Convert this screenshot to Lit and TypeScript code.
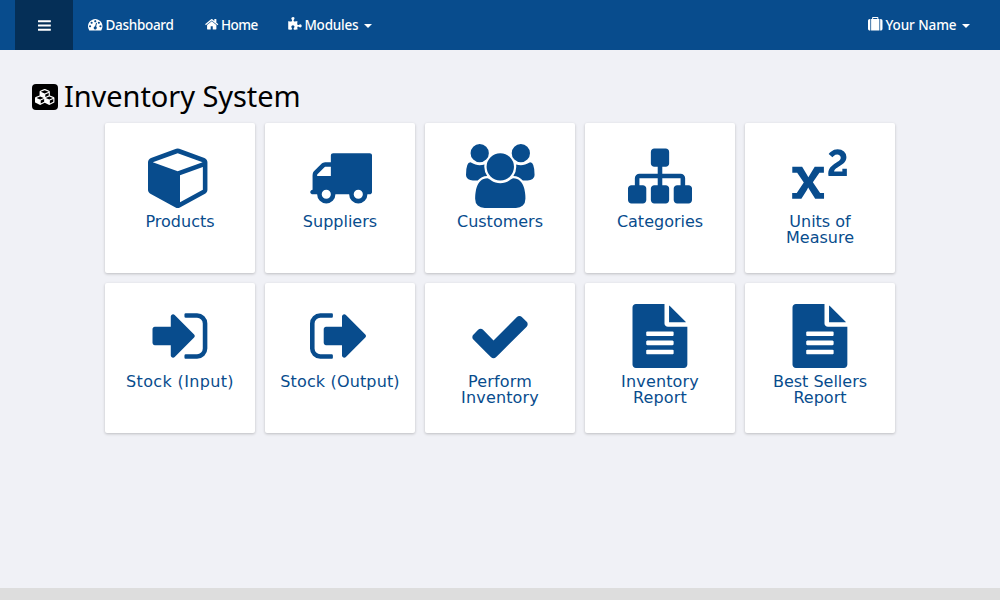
import { LitElement, html, css, svg } from "lit";
import { customElement, property } from "lit/decorators.js";

interface Glyph {
  box: string;
  w: number;
  d: string;
}

// Icon outlines on a 1792-unit em; w is the advance width.
const GLYPHS: Record<string, Glyph> = {
  cube: {
    box: "0 0 1792 1792", w: 1792,
    d: "M896 1629l640-349v-636l-640 233v752zm-64-865l698-254-698-254-698 254zm832-252v768q0 35-18 65t-49 47l-704 384q-28 16-61 16t-61-16l-704-384q-31-17-49-47t-18-65v-768q0-40 23-73t61-47l704-256q22-8 44-8t44 8l704 256q38 14 61 47t23 73z",
  },
  truck: {
    box: "0 0 1792 1792", w: 1792,
    d: "M640 1408q0-52-38-90t-90-38-90 38-38 90 38 90 90 38 90-38 38-90zm-384-512h384v-256h-158q-13 0-22 9l-195 195q-9 9-9 22v30zm1280 512q0-52-38-90t-90-38-90 38-38 90 38 90 90 38 90-38 38-90zm256-1088v1024q0 15-4 26.500t-13.500 18.500-16.500 11.500-23.500 6-22.500 2-25.500 0-22.500-.5q0 106-75 181t-181 75-181-75-75-181h-384q0 106-75 181t-181 75-181-75-75-181h-64q-3 0-22.500.5t-25.500 0-22.500-2-23.500-6-16.500-11.500-13.500-18.500-4-26.500q0-26 19-45t45-19v-320q0-8-.5-35t0-38 2.500-34.500 6.500-37 14-30.500 22.500-30l198-198q19-19 50.500-32t58.500-13h160v-192q0-26 19-45t45-19h1024q26 0 45 19t19 45z",
  },
  users: {
    box: "0 0 1920 1792", w: 1920,
    d: "M593 896q-162 5-265 128h-134q-82 0-138-40.500t-56-118.500q0-353 124-353 6 0 43.500 21t97.500 42.500 119 21.500q67 0 133-23-5 37-5 66 0 139 81 256zm1071 637q0 120-73 189.500t-194 69.500h-874q-121 0-194-69.500t-73-189.500q0-53 3.500-103.500t14-109 26.500-108.500 43-97.500 62-81 85.500-53.500 111.500-20q10 0 43 21.500t73 48 107 48 135 21.500 135-21.500 107-48 73-48 43-21.500q61 0 111.500 20t85.500 53.500 62 81 43 97.500 26.500 108.500 14 109 3.500 103.500zm-1024-1277q0 106-75 181t-181 75-181-75-75-181 75-181 181-75 181 75 75 181zm704 384q0 159-112.500 271.500t-271.500 112.500-271.500-112.500-112.500-271.500 112.500-271.500 271.500-112.500 271.500 112.500 112.500 271.500zm576 225q0 78-56 118.500t-138 40.500h-134q-103-123-265-128 81-117 81-256 0-29-5-66 66 23 133 23 59 0 119-21.500t97.500-42.500 43.500-21q124 0 124 353zm-128-609q0 106-75 181t-181 75-181-75-75-181 75-181 181-75 181 75 75 181z",
  },
  sitemap: {
    box: "0 0 1792 1792", w: 1792,
    d: "M1792 1248v320q0 40-28 68t-68 28h-320q-40 0-68-28t-28-68v-320q0-40 28-68t68-28h96v-192h-512v192h96q40 0 68 28t28 68v320q0 40-28 68t-68 28h-320q-40 0-68-28t-28-68v-320q0-40 28-68t68-28h96v-192h-512v192h96q40 0 68 28t28 68v320q0 40-28 68t-68 28h-320q-40 0-68-28t-28-68v-320q0-40 28-68t68-28h96v-192q0-52 38-90t90-38h512v-192h-96q-40 0-68-28t-28-68v-320q0-40 28-68t68-28h320q40 0 68 28t28 68v320q0 40-28 68t-68 28h-96v192h512q52 0 90 38t38 90v192h96q40 0 68 28t28 68z",
  },
  power: {
    box: "16 0 1792 1792", w: 1792,
    d: "M1025 1369v167h-248l-159-252-24-42q-8-9-11-21h-3l-9 21q-10 20-25 44l-155 250h-258v-167h128l197-291-185-272h-137v-168h276l139 228q2 4 23 42 8 9 11 21h3q3-9 11-21l25-42 140-228h257v168h-125l-184 267 204 296h109zm639-679v206h-514l-3-27q-4-28-4-46 0-64 26-117t65-86.500 84-65 84-54.500 65-54 26-64q0-38-29.500-62.500t-70.500-24.500q-51 0-97 39-14 11-36 38l-105-92q26-37 63-66 83-65 188-65 110 0 178 59.500t68 158.500q0 56-24.500 103t-62 76.500-81.500 58.500-82 50.500-65.500 51.500-30.500 63h232v-80h126z",
  },
  signIn: {
    box: "14 0 1536 1792", w: 1536,
    d: "M1184 896q0 26-19 45l-544 544q-19 19-45 19t-45-19-19-45v-288h-448q-26 0-45-19t-19-45v-384q0-26 19-45t45-19h448v-288q0-26 19-45t45-19 45 19l544 544q19 19 19 45zm352-352v704q0 119-84.500 203.500t-203.500 84.500h-320q-13 0-22.500-9.500t-9.500-22.500q0-4-1-20t-.5-26.500 3-23.500 10-19.500 20.500-6.500h320q66 0 113-47t47-113v-704q0-66-47-113t-113-47h-312l-11.500-1-11.500-3-8-5.500-7-9-2-13.500q0-4-1-20t-.5-26.500 3-23.500 10-19.500 20.500-6.500h320q119 0 203.500 84.500t84.500 203.500z",
  },
  signOut: {
    box: "0 0 1664 1792", w: 1664,
    d: "M640 1440q0 4 1 20t.5 26.500-3 23.500-10 19.500-20.500 6.500h-320q-119 0-203.500-84.500t-84.500-203.500v-704q0-119 84.500-203.500t203.500-84.500h320q13 0 22.500 9.500t9.500 22.500q0 4 1 20t.5 26.500-3 23.500-10 19.500-20.500 6.500h-320q-66 0-113 47t-47 113v704q0 66 47 113t113 47h312l11.500 1 11.500 3 8 5.500 7 9 2 13.500zm928-544q0 26-19 45l-544 544q-19 19-45 19t-45-19-19-45v-288h-448q-26 0-45-19t-19-45v-384q0-26 19-45t45-19h448v-288q0-26 19-45t45-19 45 19l544 544q19 19 19 45z",
  },
  check: {
    box: "0 0 1792 1792", w: 1792,
    d: "M1671 566q0 40-28 68l-724 724-136 136q-28 28-68 28t-68-28l-136-136-362-362q-28-28-28-68t28-68l136-136q28-28 68-28t68 28l294 295 656-657q28-28 68-28t68 28l136 136q28 28 28 68z",
  },
  file: {
    box: "142 0 1536 1792", w: 1536,
    d: "M1596 476q14 14 28 36h-472v-472q22 14 36 28zM1120 640h544v1056q0 40-28 68t-68 28h-1344q-40 0-68-28t-28-68v-1600q0-40 28-68t68-28h800v544q0 40 28 68t68 28zM1280 1376v-64q0-14-9-23t-23-9h-704q-14 0-23 9t-9 23v64q0 14 9 23t23 9h704q14 0 23-9t9-23zm0-256v-64q0-14-9-23t-23-9h-704q-14 0-23 9t-9 23v64q0 14 9 23t23 9h704q14 0 23-9t9-23zm0-256v-64q0-14-9-23t-23-9h-704q-14 0-23 9t-9 23v64q0 14 9 23t23 9h704q14 0 23-9t9-23z",
  },
  bars: {
    box: "128 0 1536 1792", w: 1536,
    d: "M1664 1344v128q0 26-19 45t-45 19h-1408q-26 0-45-19t-19-45v-128q0-26 19-45t45-19h1408q26 0 45 19t19 45zm0-512v128q0 26-19 45t-45 19h-1408q-26 0-45-19t-19-45v-128q0-26 19-45t45-19h1408q26 0 45 19t19 45zm0-512v128q0 26-19 45t-45 19h-1408q-26 0-45-19t-19-45v-128q0-26 19-45t45-19h1408q26 0 45 19t19 45z",
  },
  gauge: {
    box: "0 0 1792 1792", w: 1792,
    d: "M384 1152q0-53-37.500-90.500t-90.500-37.500-90.500 37.500-37.500 90.500 37.500 90.500 90.500 37.500 90.500-37.500 37.500-90.500zm192-448q0-53-37.500-90.500t-90.500-37.500-90.500 37.500-37.500 90.500 37.500 90.500 90.500 37.500 90.500-37.500 37.500-90.500zm428 481l101-382q6-26-7.500-48.500t-38.500-29.500-48 6.500-30 39.500l-101 382q-60 5-107 43.500t-63 98.500q-20 77 20 146t117 89 146-20 89-117q16-60-6-117t-72-91zm660-33q0-53-37.500-90.500t-90.500-37.500-90.500 37.500-37.500 90.500 37.500 90.500 90.500 37.500 90.500-37.500 37.500-90.500zm-640-640q0-53-37.500-90.500t-90.500-37.500-90.500 37.500-37.500 90.500 37.500 90.500 90.500 37.500 90.500-37.500 37.500-90.500zm448 192q0-53-37.500-90.500t-90.500-37.500-90.500 37.500-37.500 90.500 37.500 90.500 90.500 37.500 90.500-37.500 37.500-90.500zm320 448q0 261-141 483-19 29-54 29h-1402q-35 0-54-29-141-221-141-483 0-182 71-348t191-286 286-191 348-71 348 71 286 191 191 286 71 348z",
  },
  home: {
    box: "64 0 1664 1792", w: 1664,
    d: "M1472 992v480q0 26-19 45t-45 19h-384v-384h-256v384h-384q-26 0-45-19t-19-45v-480q0-1 .5-3t.5-3l575-474 575 474q1 2 1 6zm223-69l-62 74q-8 9-21 11h-3q-13 0-21-7l-692-577-692 577q-12 8-24 7-13-2-21-11l-62-74q-8-10-7-23.500t11-21.500l719-599q32-26 76-26t76 26l244 204v-195q0-14 9-23t23-9h192q14 0 23 9t9 23v408l219 182q10 8 11 21.500t-7 23.500z",
  },
  puzzle: {
    box: "64 0 1664 1792", w: 1664,
    d: "M1755 1099q0 81-44.500 135t-123.500 54q-41 0-77.500-17.500t-59-38-56.500-38-71-17.500q-110 0-110 124 0 39 16 115t15 115v5q-22 0-33 1-34 3-97.500 11.500t-115.500 13.500-98 5q-61 0-103-26.500t-42-83.500q0-37 17.500-71t38-56.500 38-59 17.500-77.500q0-79-54-123.500t-135-44.500q-84 0-143 45.500t-59 127.500q0 43 15 83t33.500 64.500 33.500 53 15 50.500q0 45-46 89-37 35-117 35-95 0-245-24-9-2-27.500-4t-27.500-4l-13-2q-1 0-3-1-2 0-2-1v-1024q2 1 17.500 3.500t34 5 21.500 3.500q150 24 245 24 80 0 117-35 46-44 46-89 0-22-15-50.500t-33.500-53-33.500-64.500-15-83q0-82 59-127.500t144-45.500q80 0 134 44.500t54 123.500q0 41-17.500 77.500t-38 59-38 56.500-17.500 71q0 57 42 83.500t103 26.500q64 0 180-15t163-17v2q-1 2-3.500 17.500t-5 34-3.500 21.500q-24 150-24 245 0 80 35 117 44 46 89 46 22 0 50.500-15t53-33.500 64.500-33.500 83-15q82 0 127.500 59t45.500 143z",
  },
  suitcase: {
    box: "0 0 1792 1792", w: 1792,
    d: "M640 256h512v-128h-512v128zm-352 0v1408h-64q-92 0-158-66t-66-158v-960q0-92 66-158t158-66h64zm1120 0v1408h-1024v-1408h128v-160q0-40 28-68t68-28h576q40 0 68 28t28 68v160h128zm384 224v960q0 92-66 158t-158 66h-64v-1408h64q92 0 158 66t66 158z",
  },
  cubes: {
    box: "0 0 2176 1792", w: 2176,
    d: "M640 1632l384-192v-314l-384 164v342zm-64-454l404-173-404-173-404 173zm1088 454l384-192v-314l-384 164v342zm-64-454l404-173-404-173-404 173zm-448-293l384-165v-266l-384 164v267zm-64-379l441-189-441-189-441 189zm1088 518v416q0 36-19 67t-52 47l-448 224q-25 14-57 14t-57-14l-448-224q-5-2-7-4-2 2-7 4l-448 224q-25 14-57 14t-57-14l-448-224q-33-16-52-47t-19-67v-416q0-38 21.500-70t56.500-48l434-186v-400q0-38 21.500-70t56.500-48l448-192q23-10 50-10t50 10l448 192q35 16 56.500 48t21.500 70v400l434 186q36 16 57 48t21 70z",
  },
};

@customElement("fa-icon")
class FaIcon extends LitElement {
  @property() name = "cube";
  @property({ type: Number }) size = 14.5;

  static styles = css`
    :host { display: block; flex: none; }
    svg { display: block; fill: currentColor; overflow: visible; }
  `;

  render() {
    const g = GLYPHS[this.name];
    return html`<svg viewBox=${g.box} width=${(g.w / 1792) * this.size} height=${this.size}>
      ${svg`<path fill-rule="evenodd" d=${g.d}></path>`}
    </svg>`;
  }
}

const TILES: [string, string, string][] = [
  ["cube", "Products", ""],
  ["truck", "Suppliers", ""],
  ["users", "Customers", ""],
  ["sitemap", "Categories", ""],
  ["power", "Units of Measure", ""],
  ["signIn", "Stock (Input)", "wide"],
  ["signOut", "Stock (Output)", "roomy"],
  ["check", "Perform Inventory", "roomy"],
  ["file", "Inventory Report", "roomy"],
  ["file", "Best Sellers Report", ""],
];

@customElement("app-root")
class AppRoot extends LitElement {
  static styles = css`
    :host {
      display: flex;
      flex-direction: column;
      height: 600px;
      background: #f0f1f6;
      font-family: "Noto Sans", "Open Sans", sans-serif;
    }
    nav {
      display: flex;
      flex: none;
      height: 50px;
      padding: 0 15px;
      background: #084c8d;
      color: #fff;
      font-size: 13.5px;
      font-weight: 500;
      line-height: 20px;
      white-space: nowrap;
    }
    .toggle {
      display: flex;
      align-items: center;
      justify-content: center;
      width: 58px;
      background: #052f57;
    }
    .item { display: flex; align-items: center; padding: 0 15px; }
    .item fa-icon { margin-bottom: 1px; }
    .right { margin-left: auto; }
    .text { margin-left: 3px; }
    .dash { width: 69px; letter-spacing: -0.3px; }
    .homepage { width: 37px; letter-spacing: -0.5px; }
    .modules { width: 54px; letter-spacing: -0.2px; }
    .user { width: 70.5px; letter-spacing: -0.1px; }
    .caret {
      margin: 2px 0 0 6px;
      border-top: 4px solid #fff;
      border-left: 4px solid transparent;
      border-right: 4px solid transparent;
    }
    main { flex: 1; }
    .heading {
      display: flex;
      align-items: center;
      height: 34px;
      padding: 30px 32px 9px;
    }
    .badge {
      display: flex;
      align-items: center;
      justify-content: center;
      width: 26px;
      height: 26px;
      border-radius: 4px;
      background: #000;
      color: #fff;
    }
    h1 {
      margin: 0 0 2px 6px;
      font-size: 29px;
      font-weight: 400;
      line-height: 34px;
      letter-spacing: -0.07px;
      color: #000;
      white-space: nowrap;
    }
    .grid {
      display: grid;
      grid-template-columns: repeat(5, 150px);
      grid-auto-rows: 150px;
      gap: 10px;
      justify-content: center;
    }
    .tile {
      display: flex;
      flex-direction: column;
      align-items: center;
      box-sizing: border-box;
      padding: 21px 10px 0;
      border-radius: 2px;
      background: #fff;
      box-shadow: 0 1px 3px rgba(0, 0, 0, 0.22);
      color: #084c8d;
    }
    .label {
      max-width: 125px;
      margin-top: 6px;
      font: 16px/16px "DejaVu Sans", sans-serif;
      text-align: center;
    }
    .wide { letter-spacing: 0.35px; }
    .roomy { letter-spacing: 0.15px; }
    footer { flex: none; height: 12px; background: #ddd; }
  `;

  render() {
    return html`
      <nav>
        <div class="toggle"><fa-icon name="bars" size="15"></fa-icon></div>
        <div class="item"><fa-icon name="gauge"></fa-icon><span class="text dash">Dashboard</span></div>
        <div class="item"><fa-icon name="home"></fa-icon><span class="text homepage">Home</span></div>
        <div class="item"><fa-icon name="puzzle"></fa-icon><span class="text modules">Modules</span><i class="caret"></i></div>
        <div class="item right"><fa-icon name="suitcase"></fa-icon><span class="text user">Your Name</span><i class="caret"></i></div>
      </nav>
      <main>
        <div class="heading">
          <div class="badge"><fa-icon name="cubes" size="16"></fa-icon></div>
          <h1>Inventory System</h1>
        </div>
        <div class="grid">
          ${TILES.map(
            ([icon, label, spacing]) => html`<div class="tile">
              <fa-icon name=${icon} size="64"></fa-icon>
              <div class="label ${spacing}">${label}</div>
            </div>`
          )}
        </div>
      </main>
      <footer></footer>
    `;
  }
}
